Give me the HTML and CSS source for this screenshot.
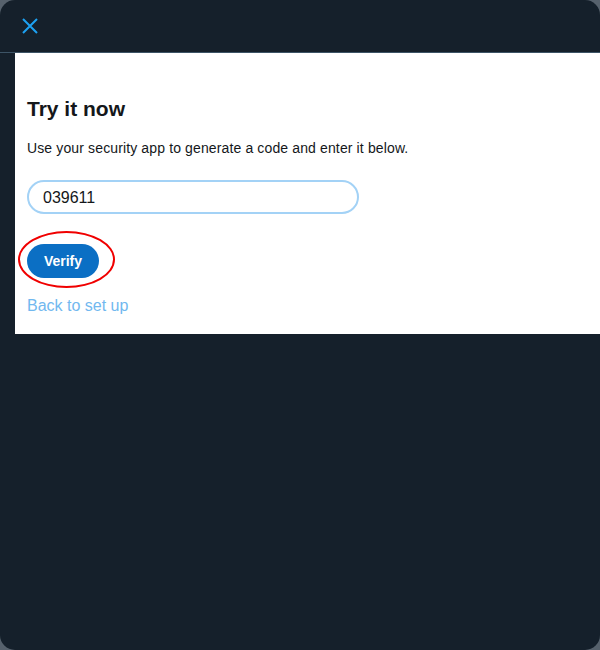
FILE: index.html
```html
<!DOCTYPE html>
<html>
<head>
<meta charset="utf-8">
<link rel="stylesheet" href="styles.css">
</head>
<body>
<div class="dialog">
  <div class="header">
    <button class="close" aria-label="Close">
      <svg width="18" height="18" viewBox="0 0 18 18"><path d="M2 2 L16 16 M16 2 L2 16" stroke="#1da1f2" stroke-width="2" fill="none" stroke-linecap="butt"/></svg>
    </button>
  </div>
  <div class="body">
    <div class="panel">
      <h2 class="title">Try it now</h2>
      <p class="desc">Use your security app to generate a code and enter it below.</p>
      <input class="code" type="text" value="039611">
      <div class="actions">
        <span class="btn-wrap">
          <button class="verify">Verify</button>
          <span class="ring"></span>
        </span>
      </div>
      <a class="back" href="#">Back to set up</a>
    </div>
  </div>
</div>
</body>
</html>
```
FILE: styles.css
```css
html, body {
  margin: 0;
  padding: 0;
  background: #56616c;
}
.dialog {
  width: 600px;
  height: 650px;
  background: #15202b;
  border-radius: 15px;
  overflow: hidden;
  font-family: "Liberation Sans", Arial, sans-serif;
}
.header {
  height: 52px;
  border-bottom: 1px solid #3d5466;
  display: flex;
  align-items: center;
  padding-left: 21px;
}
.close {
  background: none;
  border: 0;
  padding: 0;
  width: 18px;
  height: 18px;
  display: block;
}
.close svg { display: block; }
.body {
  padding-left: 15px;
}
.panel {
  background: #ffffff;
  padding: 44px 12px 18px 12px;
}
.title {
  margin: 0;
  font-size: 21px;
  line-height: 24px;
  font-weight: bold;
  color: #14171a;
}
.desc {
  margin: 17px 0 0 0;
  font-size: 14px;
  letter-spacing: 0.13px;
  line-height: 20px;
  color: #14171a;
}
.code {
  display: block;
  margin-top: 22px;
  box-sizing: border-box;
  width: 332px;
  height: 34px;
  border: 2px solid #a3d2f6;
  border-radius: 17px;
  padding: 2px 14px 0 14px;
  font-family: "Liberation Sans", Arial, sans-serif;
  font-size: 16px;
  color: #14171a;
  outline: none;
}
.actions {
  margin-top: 30px;
  display: flex;
}
.btn-wrap {
  position: relative;
  display: inline-block;
}
.verify {
  display: block;
  width: 72px;
  height: 34px;
  border: 0;
  border-radius: 17px;
  background: #0b6fc4;
  color: #ffffff;
  font-family: "Liberation Sans", Arial, sans-serif;
  font-weight: bold;
  font-size: 14px;
  padding: 0;
}
.ring {
  position: absolute;
  left: -9px;
  top: -13px;
  width: 93px;
  height: 53px;
  border: 2.5px solid #f00000;
  border-radius: 50%;
  pointer-events: none;
}
.back {
  display: block;
  margin-top: 18px;
  font-size: 16px;
  line-height: 20px;
  color: #71b8ef;
  text-decoration: none;
}
```
